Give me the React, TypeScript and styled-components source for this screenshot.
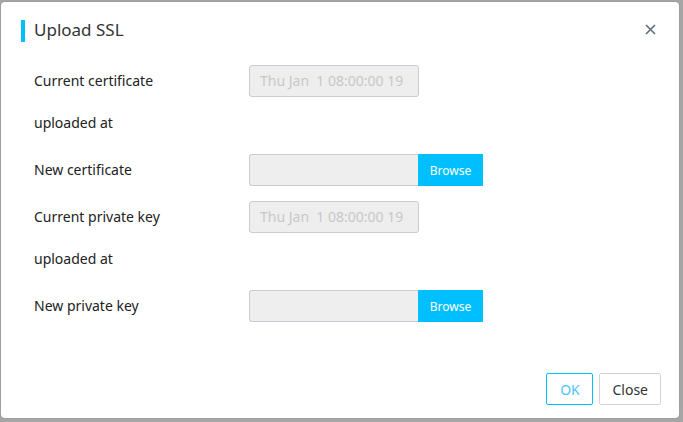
import React from "react";
import styled, { createGlobalStyle } from "styled-components";

const Global = createGlobalStyle`
  html, body { margin: 0; padding: 0; }
  body {
    background: #a6a6a6;
    font-family: "Noto Sans", "Open Sans", "Liberation Sans", sans-serif;
    width: 683px;
    height: 422px;
    overflow: hidden;
  }
`;

const Page = styled.div`
  width: 683px;
  height: 422px;
  padding: 2px 4px 4px 1px;
  box-sizing: border-box;
`;

const Dialog = styled.div`
  width: 678px;
  height: 416px;
  background: #fff;
  border-radius: 4px;
  display: flex;
  flex-direction: column;
  box-sizing: border-box;
  box-shadow: 0 0 2px rgba(0,0,0,0.15);
`;

const Header = styled.div`
  height: 58px;
  display: flex;
  align-items: center;
  padding: 0 23px 0 20px;
`;

const Accent = styled.div`
  width: 4px;
  height: 22px;
  background: #00bfff;
  margin-right: 9px;
`;

const Title = styled.div`
  flex: 1;
  font-size: 17px;
  color: #333;
  margin-top: -4px;
`;

const CloseX = styled.button`
  border: 0;
  background: none;
  padding: 0;
  width: 12px;
  height: 12px;
  display: flex;
  align-items: center;
  justify-content: center;
  cursor: pointer;
  margin-top: -4px;
`;

const Body = styled.div`
  flex: 1;
  display: flex;
  flex-direction: column;
  gap: 10px;
  padding: 0 0 0 33px;
`;

const Row = styled.div`
  display: flex;
  align-items: flex-start;
`;

const Label = styled.div`
  width: 160px;
  margin-right: 55px;
  font-size: 14px;
  line-height: 42px;
  color: #222;
`;

const SingleLabel = styled(Label)`
  line-height: 32px;
`;

const ReadOnly = styled.div<{ $offset: number }>`
  margin-top: ${(p) => p.$offset}px;
  width: 170px;
  height: 32px;
  box-sizing: border-box;
  background: #eeeeee;
  border: 1px solid #cbcbd3;
  border-radius: 3px;
  padding: 0 10px;
`;

const ReadOnlyText = styled.div`
  font-size: 14px;
  line-height: 30px;
  color: #c8c8c8;
  white-space: pre;
`;

const FileGroup = styled.div`
  display: flex;
  height: 32px;
`;

const FileBox = styled.div`
  width: 169px;
  box-sizing: border-box;
  background: #eeeeee;
  border: 1px solid #cbcbd3;
  border-right: 0;
  border-radius: 3px 0 0 3px;
`;

const Browse = styled.button`
  width: 65px;
  border: 0;
  background: #00bfff;
  color: #fff;
  font-family: inherit;
  font-size: 12px;
  padding: 0;
  cursor: pointer;
`;

const Footer = styled.div`
  display: flex;
  justify-content: flex-end;
  gap: 6px;
  padding: 0 18px 13px 0;
`;

const Btn = styled.button<{ $primary?: boolean }>`
  height: 32px;
  box-sizing: border-box;
  padding: 0 12px;
  min-width: 47px;
  border-radius: 2px;
  background: #fff;
  font-family: inherit;
  font-size: 14px;
  border: 1px solid ${(p) => (p.$primary ? "#00bfff" : "#d3d3d3")};
  color: ${(p) => (p.$primary ? "#4cc6f5" : "#333")};
  cursor: pointer;
`;

export default function App() {
  return (
    <>
      <Global />
      <Page>
        <Dialog>
          <Header>
            <Accent />
            <Title>Upload SSL</Title>
            <CloseX aria-label="close">
              <svg width="11" height="11" viewBox="0 0 11 11">
                <path d="M1 1L10 10M10 1L1 10" stroke="#5b6e80" strokeWidth="1.6" />
              </svg>
            </CloseX>
          </Header>
          <Body>
            <Row>
              <Label>Current certificate uploaded at</Label>
              <ReadOnly $offset={5}>
                <ReadOnlyText>Thu Jan  1 08:00:00 19</ReadOnlyText>
              </ReadOnly>
            </Row>
            <Row>
              <SingleLabel>New certificate</SingleLabel>
              <FileGroup>
                <FileBox />
                <Browse>Browse</Browse>
              </FileGroup>
            </Row>
            <Row>
              <Label>Current private key uploaded at</Label>
              <ReadOnly $offset={5}>
                <ReadOnlyText>Thu Jan  1 08:00:00 19</ReadOnlyText>
              </ReadOnly>
            </Row>
            <Row>
              <SingleLabel>New private key</SingleLabel>
              <FileGroup>
                <FileBox />
                <Browse>Browse</Browse>
              </FileGroup>
            </Row>
          </Body>
          <Footer>
            <Btn $primary>OK</Btn>
            <Btn>Close</Btn>
          </Footer>
        </Dialog>
      </Page>
    </>
  );
}
